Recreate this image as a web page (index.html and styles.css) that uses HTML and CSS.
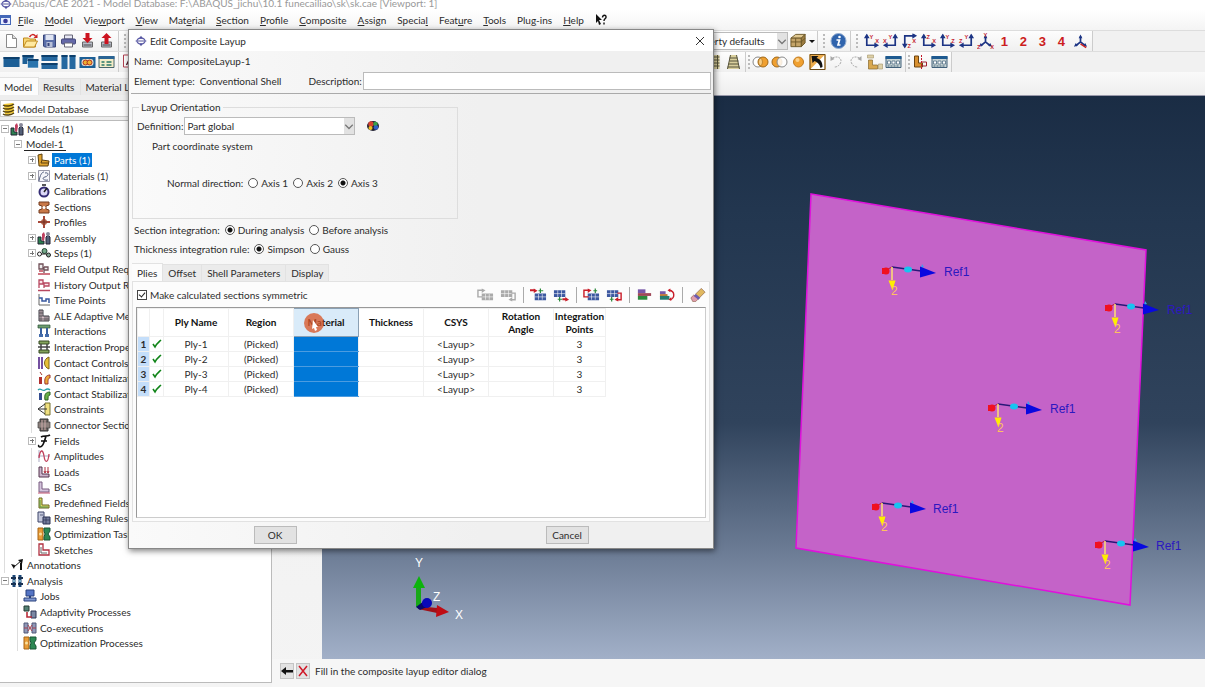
FILE: index.html
```html
<!DOCTYPE html>
<html lang="en">
  <head>
    <meta charset="UTF-8" />
    <title>Abaqus/CAE 2021</title>
    <link rel="stylesheet" href="styles.css">
  </head>
  <body>
    <!-- Icon sprite -->
    <svg class="sprite" aria-hidden="true">
      <symbol id="logo" viewBox="0 0 14 14"><path d="M7 1l2 3H5zM7 13l2-3H5zM0 7l3-1h8l3 1-3 1H3z" fill="#3c3c8c"/><ellipse cx="7" cy="7" rx="4.5" ry="3.5" fill="none" stroke="#5d5da8" stroke-width="1.6"/><path d="M3 7h8" stroke="#fff"/></symbol>
      <symbol id="appwin" viewBox="0 0 12 12"><rect x=".5" y="1.500" width="10" height="9" fill="#e8eeff" stroke="#4468b8"/><path d="M1 3h9" stroke="#4468b8" stroke-width="2"/><circle cx="5.500" cy="7" r="2.300" fill="#3a3a98"/></symbol>
      <symbol id="new" viewBox="0 0 16 16"><path d="M3 1.500h6l4 4v9H3z" fill="#fff" stroke="#8a8a8a"/><path d="M9 1.500v4h4" fill="#ddd" stroke="#8a8a8a"/></symbol>
      <symbol id="open" viewBox="0 0 16 16"><path d="M1 14V5h5l1 1h6v8z" fill="#f7d774" stroke="#c08a20"/><path d="M1 14l3-6h11l-3 6z" fill="#ffe9a0" stroke="#c08a20"/><path d="M7 4c2-3 4-3 6-1" fill="none" stroke="#c22" stroke-width="1.500"/><path d="M15 1v4h-4z" fill="#c22"/></symbol>
      <symbol id="save" viewBox="0 0 16 16"><path d="M2 2h12v12H3l-1-1z" fill="#5a6ea8" stroke="#38457a"/><path d="M4 2h8v5H4z" fill="#dfe4f2"/><path d="M5 9h6v5H5z" fill="#b8c0d8"/><path d="M6 10h2v3H6z" fill="#38457a"/></symbol>
      <symbol id="print" viewBox="0 0 16 16"><path d="M4 2h8v4H4z" fill="#e8e8f4" stroke="#667"/><rect x="1" y="6" width="14" height="5" rx="1" fill="#6468a8" stroke="#44487c"/><path d="M4 10h8v4H4z" fill="#fff" stroke="#667"/></symbol>
      <symbol id="dbin" viewBox="0 0 16 16"><path d="M3 9h10v5H3z" fill="#b8bcc8" stroke="#666"/><path d="M4 12h8" stroke="#444"/><path d="M6 0h4v5h3L8 10 3 5h3z" fill="#cc1420"/></symbol>
      <symbol id="dbout" viewBox="0 0 16 16"><path d="M3 9h10v5H3z" fill="#b8bcc8" stroke="#666"/><path d="M4 12h8" stroke="#444"/><path d="M6 11h4V5h3L8 0 3 5h3z" fill="#cc1420"/></symbol>
      <symbol id="vp1" viewBox="0 0 16 16"><path d="M0 3h16v10H0z" fill="#1d5f96"/><path d="M0 3h16v2H0z" fill="#0d3f6c"/></symbol>
      <symbol id="vp2" viewBox="0 0 16 16"><path d="M0 1h11v9H0z" fill="#1d5f96"/><path d="M0 1h11v2H0z" fill="#0d3f6c"/><path d="M5 5h11v9H5z" fill="#2a74ad" stroke="#fff" stroke-width=".6"/><path d="M5 5h11v2H5z" fill="#0d3f6c"/></symbol>
      <symbol id="vp3" viewBox="0 0 16 16"><path d="M0 1h16v6H0zM0 9h16v6H0z" fill="#2568a0"/><path d="M0 1h16v2H0zM0 9h16v2H0z" fill="#0d3f6c"/></symbol>
      <symbol id="vp4" viewBox="0 0 16 16"><path d="M1 1h6v14H1zM9 1h6v14H9z" fill="#2568a0"/><path d="M1 1h6v2H1zM9 1h6v2H9z" fill="#0d3f6c"/></symbol>
      <symbol id="link" viewBox="0 0 16 16"><path d="M0 3h16v11H0z" fill="#1d5f96"/><rect x="2" y="5" width="12" height="7" rx="3" fill="#e8e2d0"/><circle cx="6" cy="8.500" r="2.500" fill="#f0b030" stroke="#b03020"/><circle cx="10" cy="8.500" r="2.500" fill="#f0b030" stroke="#b03020"/></symbol>
      <symbol id="sheet" viewBox="0 0 16 16"><path d="M.5 2.500h15v11H.5z" fill="#f4ecc8" stroke="#48666c"/><path d="M0 2h16v3H0z" fill="#2a6494"/><path d="M3 7h3v2H3zM8 7h5v2H8zM3 10h3v2H3zM8 10h5v2H8z" fill="#5a9480"/></symbol>
      <symbol id="table" viewBox="0 0 16 16"><path d="M.5 2.500h15v11H.5z" fill="#c8d4d4" stroke="#41607a"/><path d="M0 2h16v3H0z" fill="#1e5a90"/><path d="M2 7h3v3H2zM6.500 7h3v3h-3zM11 7h3v3h-3z" fill="#fff" stroke="#41607a" stroke-width=".7"/><path d="M2 12h12" stroke="#41607a" stroke-dasharray="2 1"/></symbol>
      <symbol id="note" viewBox="0 0 16 16"><path d="M1 1h14v12H1z" fill="#fff" stroke="#b04050"/><path d="M4 11l4-8 4 8M5.500 8h5" fill="none" stroke="#5a2030" stroke-width="1.500"/></symbol>
      <symbol id="grid" viewBox="0 0 16 16"><path d="M3 1h10v14H3z" fill="#d9cf9c"/><path d="M3 3h10M3 6h10M3 9h10M3 12h10M5 1v14M11 1v14" stroke="#55523a"/></symbol>
      <symbol id="ladder" viewBox="0 0 16 16"><path d="M5 1h6l3 14H2z" fill="#d9cf9c"/><path d="M5 1L2 15M11 1l3 14M4 4h8M4 7h9M3 10h10M2 13h12" stroke="#55523a" fill="none"/></symbol>
      <symbol id="cube" viewBox="0 0 18 16"><path d="M1 5l5-4h10l-4 4z" fill="#e0c890" stroke="#6c5828"/><path d="M1 5h11v9H1z" fill="#c4a468" stroke="#6c5828"/><path d="M12 5l4-4v9l-4 4z" fill="#9c7c40" stroke="#6c5828"/><path d="M1 9h11l4-4M6 5v9" stroke="#6c5828" fill="none"/></symbol>
      <symbol id="info" viewBox="0 0 16 16"><circle cx="8" cy="8" r="7.500" fill="#2f63ac" stroke="#92acd0"/><circle cx="9" cy="4" r="1.300" fill="#fff"/><path d="M6 7h3l-1.500 5H10" fill="none" stroke="#fff" stroke-width="1.700"/></symbol>
      <symbol id="or1" viewBox="0 0 16 16"><circle cx="5.500" cy="8" r="5" fill="#fff" stroke="#888"/><circle cx="10.500" cy="8" r="5" fill="#f0a030" stroke="#a06818"/><path d="M8 4a5 5 0 0 1 0 8 5 5 0 0 1 0-8" fill="#f8cc80" stroke="#a06818" stroke-width=".6"/></symbol>
      <symbol id="or2" viewBox="0 0 16 16"><circle cx="5.500" cy="8" r="5" fill="#f0a030" stroke="#a06818"/><circle cx="10.500" cy="8" r="5" fill="#fff" fill-opacity=".85" stroke="#888"/></symbol>
      <symbol id="or3" viewBox="0 0 16 16"><circle cx="8" cy="8" r="5" fill="#f0a030" stroke="#c07a20"/><circle cx="7" cy="6" r="2" fill="#fbd08a"/></symbol>
      <symbol id="pick" viewBox="0 0 16 16"><path d="M0 0h16v16H0z" fill="#edac4c"/><path d="M1 15L15 1v14z" fill="#fff"/><path d="M2 2h7L7 4c4 1 6 4 6 9l-2 1c-1-4-3-6-6-7L3 9z" fill="#111"/><path d="M.5.5h15v15H.5z" fill="none" stroke="#6a4a18"/></symbol>
      <symbol id="undo" viewBox="0 0 16 16"><path d="M4 4c6-3 10 1 8 5s-5 4-6 4" fill="none" stroke="#a8a8a8" stroke-dasharray="2 1"/><path d="M2 2v5l4-2z" fill="#a8a8a8"/></symbol>
      <symbol id="redo" viewBox="0 0 16 16"><path d="M12 4C6 1 2 5 4 9s5 4 6 4" fill="none" stroke="#a8a8a8" stroke-dasharray="2 1"/><path d="M14 2v5l-4-2z" fill="#a8a8a8"/></symbol>
      <symbol id="parts" viewBox="0 0 16 16"><path d="M1 1h6v3H1z" fill="#ddd0a8" stroke="#a49468" stroke-width=".6"/><path d="M2 6h4v5h5v4H2z" fill="#d8a850" stroke="#86682c" stroke-width=".7"/><path d="M12 10h4v5h-4z" fill="#ddd0a8" stroke="#a49468" stroke-width=".6"/></symbol>
      <symbol id="cut" viewBox="0 0 16 16"><path d="M2 2h4v7h4v4H2z" fill="#d89030" stroke="#6c4410"/><path d="M9 8h5v4H9" fill="none" stroke="#a02030"/><path d="M9 1v14" stroke="#c01828" stroke-dasharray="2 1"/></symbol>
      <!-- view axes: the corner arrows shared by the view buttons -->
      <symbol id="axL" viewBox="0 0 18 16"><path d="M4 3v9.500h9" fill="none" stroke="#1c3484" stroke-width="1.800"/><path d="M1 5l3-5 3 5zM12 9.500l5 3-5 3z" fill="#1c3484"/></symbol>
      <symbol id="axR" viewBox="0 0 18 16"><path d="M14 3v9.500H5" fill="none" stroke="#1c3484" stroke-width="1.800"/><path d="M11 5l3-5 3 5zM6 9.500l-5 3 5 3z" fill="#1c3484"/></symbol>
      <symbol id="axT" viewBox="0 0 18 16"><path d="M4 13V2.500h9" fill="none" stroke="#1c3484" stroke-width="1.800"/><path d="M1 11l3 5 3-5zM12-.5l5 3-5 3z" fill="#1c3484"/></symbol>
      <symbol id="iso" viewBox="0 0 18 16"><path d="M9 3v6l-5 4M9 9l5 4" fill="none" stroke="#1c3484" stroke-width="1.800"/><path d="M7 5l2-4 2 4zM2 14l2-4 2 3zM16 14l-4-1 2-3z" fill="#1c3484"/></symbol>
      <!-- tree -->
      <symbol id="db" viewBox="0 0 14 14"><path d="M2 2l9-1 1 10-9 2z" fill="#f0c838"/><path d="M1 3c3 2 8 1 11-1M1 6c3 2 8 1 11-1M1 9c3 2 8 1 11-1M1 12c3 2 8 1 11-1" fill="none" stroke="#55420c" stroke-width="1.500"/></symbol>
      <symbol id="t-models" viewBox="0 0 14 14"><path d="M1 6h3v4h3v3H1z" fill="#2c8050" stroke="#223"/><path d="M5 9V3l2-2 1 3-1 6z" fill="#c04060"/><path d="M9 13V6l2-2 2 2v7z" fill="#546078" stroke="#223"/><circle cx="11" cy="3" r="2" fill="#889"/></symbol>
      <symbol id="t-part" viewBox="0 0 14 14"><path d="M1 2l4-1v6l7 1-1 5H2z" fill="#e0a430" stroke="#5c4010"/><path d="M5 7l-1 3h8" fill="none" stroke="#5c4010"/></symbol>
      <symbol id="t-mat" viewBox="0 0 14 14"><path d="M1.500 1.500h11v11h-11z" fill="#f4f4fa" stroke="#99a"/><path d="M2 12c1-6 3-9 5-9M8 4c4-1 4 3 0 4s-1 4 3 3" fill="none" stroke="#556080"/></symbol>
      <symbol id="t-cal" viewBox="0 0 14 14"><circle cx="7" cy="8" r="4.500" fill="#dcd8f8" stroke="#342c74" stroke-width="2"/><path d="M7 8l3-4M5 1h4" stroke="#222" stroke-width="1.500"/></symbol>
      <symbol id="t-sec" viewBox="0 0 14 14"><path d="M2 2h10v3l-3 1v3l3 1v3H2v-3l3-1V6L2 5z" fill="#c87848" stroke="#743c20"/><circle cx="7" cy="7.500" r="1.500" fill="#fff"/></symbol>
      <symbol id="t-prof" viewBox="0 0 14 14"><path d="M7 1v12M1 7h12" stroke="#a84838" stroke-width="2"/><circle cx="7" cy="7" r="3" fill="#b46048"/><path d="M4 7h6M7 4v6" stroke="#702c20"/></symbol>
      <symbol id="t-step" viewBox="0 0 14 14"><circle cx="2.500" cy="8" r="2" fill="#fff" stroke="#222"/><circle cx="7.500" cy="5" r="2.500" fill="#74a888" stroke="#224434"/><circle cx="11.500" cy="9" r="2" fill="#8a9" stroke="#222"/><path d="M4 8h6" stroke="#222"/></symbol>
      <symbol id="t-out" viewBox="0 0 14 14"><path d="M2 2h4v5H2zM7 5v6M7 5h4v3H7" fill="#eee" stroke="#705058" stroke-width="1.300"/><path d="M1 12h12M2 9h4" stroke="#c04858" stroke-width="1.500"/></symbol>
      <symbol id="t-hist" viewBox="0 0 14 14"><path d="M2 10V2h4v4H2M7 10V5h5v3H7" fill="#fbe4e8" stroke="#b84860" stroke-width="1.300"/><path d="M1 12.500h12" stroke="#b84860" stroke-width="1.500"/></symbol>
      <symbol id="t-time" viewBox="0 0 14 14"><path d="M2 1v11h11" fill="none" stroke="#666"/><path d="M2 5h3v3h4V6h3v4" fill="none" stroke="#3858a0" stroke-width="1.500"/></symbol>
      <symbol id="t-ale" viewBox="0 0 14 14"><path d="M2 1h4v6h6v5H2z" fill="#d8c0c8" stroke="#3c3c44"/><path d="M2 4h4M2 7h4M4 1v11M8 7v5M10 7v5M2 10h10" stroke="#3c3c44" stroke-width=".7"/></symbol>
      <symbol id="t-int" viewBox="0 0 14 14"><path d="M1 1h12v3H1z" fill="#6c9c70" stroke="#2c5034" stroke-width=".7"/><path d="M4 4v6M10 4v6" stroke="#3860a0" stroke-width="2"/><path d="M2 10h4v3H2zM8 10h4v3H8z" fill="#446cac"/></symbol>
      <symbol id="t-intp" viewBox="0 0 14 14"><path d="M2 1h10v3H2zM2 10h10v3H2z" fill="#84a45c" stroke="#344820"/><path d="M4 4v6M10 4v6M1 7h12" stroke="#444" stroke-width="1.500"/></symbol>
      <symbol id="t-cc" viewBox="0 0 14 14"><path d="M2 1v12M5 1v12" stroke="#7450a0" stroke-width="2"/><path d="M12 1c-6 2-6 10 0 12z" fill="#e8c038" stroke="#806414"/></symbol>
      <symbol id="t-ci" viewBox="0 0 14 14"><path d="M2 6h3v7H2z" fill="#b03030"/><path d="M3 1l2 3M8 13c-1-6 1-9 5-9v3c-2 0-2 2-2 6z" fill="#eca838" stroke="#a03830"/></symbol>
      <symbol id="t-cs" viewBox="0 0 14 14"><path d="M1 3c3-3 4 2 7 0s4-1 5 0" fill="none" stroke="#28a0a8" stroke-width="1.300"/><path d="M2 6h3v7H2z" fill="#344c90"/><path d="M8 13c-1-6 1-8 5-8v3c-2 0-2 2-2 5z" fill="#68b048" stroke="#2c6020"/></symbol>
      <symbol id="t-con" viewBox="0 0 14 14"><path d="M8 1h5v12H8z" fill="#f0e080" stroke="#747030"/><path d="M1 7l7-5M1 7l7 5M1 7h9" stroke="#333"/></symbol>
      <symbol id="t-conn" viewBox="0 0 14 14"><path d="M3 1h8v12H3z" fill="#6c6460" stroke="#333"/><path d="M1 4h12v6H1z" fill="#8c807c" stroke="#444" stroke-width=".7"/><path d="M5 2v10M8 2v10" stroke="#caa"/></symbol>
      <symbol id="t-field" viewBox="0 0 14 14"><path d="M4 3c3-2 6 0 9-2M9 2c-1 4-3 11-6 11-1 0-2-1-1-2M4 7h6" fill="none" stroke="#111" stroke-width="1.700"/></symbol>
      <symbol id="t-amp" viewBox="0 0 14 14"><path d="M2 1v12M1 7h12" stroke="#88a" stroke-width=".7"/><path d="M2 9c1-9 4-9 5-2s4 8 5-2" fill="none" stroke="#c0405c" stroke-width="1.300"/></symbol>
      <symbol id="t-load" viewBox="0 0 14 14"><path d="M2 2h3v7h7v3H2z" fill="#ccb4cc" stroke="#54344c"/><path d="M8 2v6M11 2v6M7 6l1 2 1-2M10 6l1 2 1-2" fill="none" stroke="#b03040"/></symbol>
      <symbol id="t-bc" viewBox="0 0 14 14"><path d="M2 2h3v7h7v3H2z" fill="#d4c4dc" stroke="#785c80"/><path d="M1 13h12" stroke="#c05070"/></symbol>
      <symbol id="t-pre" viewBox="0 0 14 14"><path d="M2 2h3v7h7v3H2z" fill="#e0dc68" stroke="#686420"/><path d="M3 4v7h8" fill="none" stroke="#50904c"/></symbol>
      <symbol id="t-rem" viewBox="0 0 14 14"><path d="M1 1h6v10H1z" fill="#c4c8dc" stroke="#3c4468"/><path d="M6 6h7v7H6z" fill="#747c9c" stroke="#2c3454"/><path d="M6 9h7M9 6v7M3 4h3" stroke="#2c3454" stroke-width=".7"/></symbol>
      <symbol id="t-opt" viewBox="0 0 14 14"><path d="M1 1h5v12H1z" fill="#e89c38" stroke="#a86414"/><path d="M7 1h6v3l-2 3 2 3v3H7v-3l1-3-1-3z" fill="#2c8854" stroke="#185434"/><circle cx="3.500" cy="7" r="1.500" fill="#f8e0a0"/></symbol>
      <symbol id="t-sk" viewBox="0 0 14 14"><path d="M2 1h4v6h6v5H2z" fill="#fff" stroke="#b03040" stroke-width="1.300"/><path d="M4 4v6h6" fill="none" stroke="#666"/></symbol>
      <symbol id="t-ann" viewBox="0 0 14 14"><path d="M12 2L4 9" stroke="#111"/><path d="M1 6l4 1-1 4zM8 2l5-1-1 5zM10 5h2v7h-2z" fill="#111"/></symbol>
      <symbol id="t-ana" viewBox="0 0 14 14"><path d="M4 1v12M10 1v12" stroke="#1c4878" stroke-width="3"/><path d="M1 4h5M1 10h5M8 4h5M8 10h5" stroke="#183050" stroke-width="2"/><circle cx="4" cy="7" r="1" fill="#9cd"/><circle cx="10" cy="7" r="1" fill="#9cd"/></symbol>
      <symbol id="t-job" viewBox="0 0 14 14"><path d="M3 1h8v6H3z" fill="#5474c4" stroke="#28407c"/><path d="M6 7h2v2H6z" fill="#28407c"/><path d="M1 9h12v3H1z" fill="#8098d0" stroke="#28407c"/></symbol>
      <symbol id="t-ada" viewBox="0 0 14 14"><path d="M1 1h5v5H1z" fill="#548074" stroke="#243c34"/><path d="M8 6h5v7H8z" fill="#7c88a4" stroke="#2c3454"/><path d="M4 7v5h5" fill="none" stroke="#b82c38" stroke-width="1.600"/></symbol>
      <symbol id="t-co" viewBox="0 0 14 14"><path d="M1 2h4v10H1zM9 2h4v10H9z" fill="#9098b8" stroke="#505878"/><path d="M5 4l4 6M9 4l-4 6M1 7h4M9 7h4" stroke="#a84050"/></symbol>
      <!-- ply table -->
      <symbol id="p-rows" viewBox="0 0 18 14"><path d="M5 5.500h12v7H5z" fill="currentColor"/><path d="M5 9h12M9 6v6M13 6v6" stroke="#fff" stroke-width=".6"/></symbol>
      <symbol id="p-rowsup" viewBox="0 0 18 14"><path d="M1 2h12v7H1z" fill="currentColor"/><path d="M1 5.500h12M5 2v7M9 2v7" stroke="#fff" stroke-width=".6"/></symbol>
      <symbol id="wheel" viewBox="0 0 14 14"><ellipse cx="7" cy="7" rx="6" ry="5" fill="#223"/><circle cx="5" cy="5" r="2.700" fill="#d84030"/><circle cx="9.500" cy="5" r="2.200" fill="#38a048"/><circle cx="4.500" cy="9" r="2" fill="#f0c020"/><circle cx="10" cy="8.500" r="2.300" fill="#3060c8"/></symbol>
      <symbol id="check" viewBox="0 0 10 10"><path d="M1 5l2 3c2-4 4-5 6-7" fill="none" stroke="#108418" stroke-width="1.600"/></symbol>
      <symbol id="chev" viewBox="0 0 8 8"><path d="M1 3l3 3 3-3" fill="none" stroke="#777"/></symbol>
      <!-- material orientation marker, origin at 10,10 -->
      <symbol id="marker" viewBox="0 0 60 40"><path d="M4 13l6-3" stroke="#c01830"/><circle cx="4" cy="14" r="3.500" fill="#f01020"/><path d="M0 11h4v6H0z" fill="#f01020"/><path d="M10 10l29 4" stroke="#281878" stroke-width="1.300"/><ellipse cx="26" cy="12.500" rx="4" ry="3" fill="#18c4f0"/><path d="M40 7l2 3-3 1z" fill="#38a0f0"/><path d="M38 9.500l16 6.500-16 4.500z" fill="#0808e0"/><path d="M10 10v13" stroke="#ffe070" stroke-width="1.500"/><path d="M6.500 23.500h7l-3 10z" fill="#ffee00"/></symbol>
    </svg>

    <header class="titlebar">
      <svg class="ico-s"><use href="#logo"/></svg>
      <span>Abaqus/CAE 2021 - Model Database: F:\ABAQUS_jichu\10.1 funecailiao\sk\sk.cae [Viewport: 1]</span>
    </header>

    <nav class="menubar">
      <svg class="ico-s"><use href="#appwin"/></svg>
      <button><u>F</u>ile</button>
      <button><u>M</u>odel</button>
      <button>Vie<u>w</u>port</button>
      <button><u>V</u>iew</button>
      <button>Mat<u>e</u>rial</button>
      <button><u>S</u>ection</button>
      <button><u>P</u>rofile</button>
      <button><u>C</u>omposite</button>
      <button><u>A</u>ssign</button>
      <button>Specia<u>l</u></button>
      <button>Feat<u>u</u>re</button>
      <button><u>T</u>ools</button>
      <button>Plu<u>g</u>-ins</button>
      <button><u>H</u>elp</button>
      <button class="whats" aria-label="What's this">
        <svg class="ico-s" viewBox="0 0 12 12"><path d="M1 0l6 6H4l2 4-2 1-1-4-2 2z" fill="#111"/><path d="M7.500 3.500c0-3 4-3 3.500 0-.5 1.500-2 1.500-2 3.500M9 8.500v2" fill="none" stroke="#111" stroke-width="1.400"/></svg>
      </button>
    </nav>

    <div class="toolbar">
      <div class="group">
        <button aria-label="New"><svg><use href="#new"/></svg></button>
        <button aria-label="Open"><svg><use href="#open"/></svg></button>
        <button aria-label="Save"><svg><use href="#save"/></svg></button>
        <button aria-label="Print"><svg><use href="#print"/></svg></button>
        <button aria-label="Import"><svg><use href="#dbin"/></svg></button>
        <button aria-label="Export"><svg><use href="#dbout"/></svg></button>
      </div>
      <div class="group group-defaults">
        <i class="grip"></i>
        <div class="combo combo-defaults">
          <select aria-label="Color code"><option>Property defaults</option></select>
          <svg><use href="#chev"/></svg>
        </div>
        <button class="wide" aria-label="Render style"><svg><use href="#cube"/></svg><b class="drop"></b></button>
      </div>
      <div class="group">
        <i class="grip"></i>
        <button aria-label="Query"><svg><use href="#info"/></svg></button>
      </div>
      <div class="group">
        <i class="grip"></i>
        <button aria-label="Front view"><svg viewBox="0 0 18 16"><use href="#axL"/><text x="7" y="6">Y</text><text x="13" y="10">X</text></svg></button>
        <button aria-label="Back view"><svg viewBox="0 0 18 16"><use href="#axR"/><text x="7" y="6">Y</text><text x="1" y="10">X</text></svg></button>
        <button aria-label="Top view"><svg viewBox="0 0 18 16"><use href="#axT"/><text x="12" y="10">X</text><text x="7" y="15">Z</text></svg></button>
        <button aria-label="Bottom view"><svg viewBox="0 0 18 16"><use href="#axL"/><text x="7" y="6">Z</text><text x="13" y="10">X</text></svg></button>
        <button aria-label="Left view"><svg viewBox="0 0 18 16"><use href="#axL"/><text x="7" y="6">Y</text><text x="13" y="10">Z</text></svg></button>
        <button aria-label="Right view"><svg viewBox="0 0 18 16"><use href="#axR"/><text x="7" y="6">Y</text><text x="1" y="10">Z</text></svg></button>
        <button aria-label="Iso view"><svg viewBox="0 0 18 16"><use href="#iso"/><text x="7" y="4">Y</text><text x="0" y="16">Z</text><text x="14" y="16">X</text></svg></button>
        <button class="num">1</button>
        <button class="num">2</button>
        <button class="num">3</button>
        <button class="num">4</button>
        <button aria-label="Specify view"><svg viewBox="0 0 18 16"><use href="#iso"/><path d="M9 11l6 4" stroke="#c22" stroke-width="1.500"/></svg></button>
      </div>
    </div>

    <div class="toolbar tight">
      <div class="group">
        <button aria-label="Single viewport"><svg><use href="#vp1"/></svg></button>
        <button aria-label="Cascade"><svg><use href="#vp2"/></svg></button>
        <button aria-label="Tile horizontally"><svg><use href="#vp3"/></svg></button>
        <button aria-label="Tile vertically"><svg><use href="#vp4"/></svg></button>
        <button aria-label="Link viewports"><svg><use href="#link"/></svg></button>
        <button aria-label="Viewport options"><svg><use href="#sheet"/></svg></button>
      </div>
      <div class="group group-mesh">
        <button aria-label="Annotation"><svg><use href="#note"/></svg></button>
        <button class="push" aria-label="Parallel"><svg><use href="#grid"/></svg></button>
        <button aria-label="Perspective"><svg><use href="#ladder"/></svg></button>
      </div>
      <div class="group">
        <i class="grip"></i>
        <button aria-label="Replace"><svg><use href="#or1"/></svg></button>
        <button aria-label="Remove"><svg><use href="#or2"/></svg></button>
        <button aria-label="All"><svg><use href="#or3"/></svg></button>
        <button aria-label="Pick"><svg><use href="#pick"/></svg></button>
        <button aria-label="Undo"><svg><use href="#undo"/></svg></button>
        <button aria-label="Redo"><svg><use href="#redo"/></svg></button>
        <button aria-label="Instances"><svg><use href="#parts"/></svg></button>
        <button aria-label="Display groups"><svg><use href="#table"/></svg></button>
      </div>
      <div class="group">
        <i class="grip"></i>
        <button aria-label="View cut"><svg><use href="#cut"/></svg></button>
        <button aria-label="View cut manager"><svg><use href="#table"/></svg></button>
      </div>
    </div>

    <main class="workspace">
      <aside class="sidebar">
        <div class="tabs side-tabs">
          <button class="active">Model</button>
          <button>Results</button>
          <button>Material Library</button>
        </div>
        <div class="db-bar"><svg class="ico"><use href="#db"/></svg>Model Database</div>
        <ul class="tree">
          <li><i class="box minus"></i><svg class="ico"><use href="#t-models"/></svg><span>Models (1)</span></li>
          <li class="l2 in"><i class="box minus"></i><span class="current">Model-1</span></li>
          <li class="l3 in"><i class="box plus"></i><svg class="ico"><use href="#t-part"/></svg><span class="selected">Parts (1)</span></li>
          <li class="l3 in"><i class="box plus"></i><svg class="ico"><use href="#t-mat"/></svg><span>Materials (1)</span></li>
          <li class="l3 in"><i class="box"></i><svg class="ico"><use href="#t-cal"/></svg><span>Calibrations</span></li>
          <li class="l3 in"><i class="box"></i><svg class="ico"><use href="#t-sec"/></svg><span>Sections</span></li>
          <li class="l3 in"><i class="box"></i><svg class="ico"><use href="#t-prof"/></svg><span>Profiles</span></li>
          <li class="l3 in"><i class="box plus"></i><svg class="ico"><use href="#t-models"/></svg><span>Assembly</span></li>
          <li class="l3 in"><i class="box plus"></i><svg class="ico"><use href="#t-step"/></svg><span>Steps (1)</span></li>
          <li class="l3 in"><i class="box"></i><svg class="ico"><use href="#t-out"/></svg><span>Field Output Requests</span></li>
          <li class="l3 in"><i class="box"></i><svg class="ico"><use href="#t-hist"/></svg><span>History Output Requests</span></li>
          <li class="l3 in"><i class="box"></i><svg class="ico"><use href="#t-time"/></svg><span>Time Points</span></li>
          <li class="l3 in"><i class="box"></i><svg class="ico"><use href="#t-ale"/></svg><span>ALE Adaptive Mesh Constraints</span></li>
          <li class="l3 in"><i class="box"></i><svg class="ico"><use href="#t-int"/></svg><span>Interactions</span></li>
          <li class="l3 in"><i class="box"></i><svg class="ico"><use href="#t-intp"/></svg><span>Interaction Properties</span></li>
          <li class="l3 in"><i class="box"></i><svg class="ico"><use href="#t-cc"/></svg><span>Contact Controls</span></li>
          <li class="l3 in"><i class="box"></i><svg class="ico"><use href="#t-ci"/></svg><span>Contact Initializations</span></li>
          <li class="l3 in"><i class="box"></i><svg class="ico"><use href="#t-cs"/></svg><span>Contact Stabilizations</span></li>
          <li class="l3 in"><i class="box"></i><svg class="ico"><use href="#t-con"/></svg><span>Constraints</span></li>
          <li class="l3 in"><i class="box"></i><svg class="ico"><use href="#t-conn"/></svg><span>Connector Sections</span></li>
          <li class="l3 in"><i class="box plus"></i><svg class="ico"><use href="#t-field"/></svg><span>Fields</span></li>
          <li class="l3 in"><i class="box"></i><svg class="ico"><use href="#t-amp"/></svg><span>Amplitudes</span></li>
          <li class="l3 in"><i class="box"></i><svg class="ico"><use href="#t-load"/></svg><span>Loads</span></li>
          <li class="l3 in"><i class="box"></i><svg class="ico"><use href="#t-bc"/></svg><span>BCs</span></li>
          <li class="l3 in"><i class="box"></i><svg class="ico"><use href="#t-pre"/></svg><span>Predefined Fields</span></li>
          <li class="l3 in"><i class="box"></i><svg class="ico"><use href="#t-rem"/></svg><span>Remeshing Rules</span></li>
          <li class="l3 in"><i class="box"></i><svg class="ico"><use href="#t-opt"/></svg><span>Optimization Tasks</span></li>
          <li class="l3 in"><i class="box"></i><svg class="ico"><use href="#t-sk"/></svg><span>Sketches</span></li>
          <li><i class="box"></i><svg class="ico"><use href="#t-ann"/></svg><span>Annotations</span></li>
          <li><i class="box minus"></i><svg class="ico"><use href="#t-ana"/></svg><span>Analysis</span></li>
          <li class="l2"><i class="box"></i><svg class="ico"><use href="#t-job"/></svg><span>Jobs</span></li>
          <li class="l2"><i class="box"></i><svg class="ico"><use href="#t-ada"/></svg><span>Adaptivity Processes</span></li>
          <li class="l2"><i class="box"></i><svg class="ico"><use href="#t-co"/></svg><span>Co-executions</span></li>
          <li class="l2"><i class="box"></i><svg class="ico"><use href="#t-opt"/></svg><span>Optimization Processes</span></li>
        </ul>
      </aside>

      <section class="stage">
        <div class="canvas">
          <svg class="scene" viewBox="322 96 883 563" preserveAspectRatio="xMidYMid meet">
            <polygon points="811,194 1146,250 1130,605 796,548" fill="#c463c8" stroke="#e010dc" stroke-width="1.500"/>
            <use href="#marker" x="882" y="257" width="60" height="40"/>
            <use href="#marker" x="1105" y="294" width="60" height="40"/>
            <use href="#marker" x="988" y="394" width="60" height="40"/>
            <use href="#marker" x="872" y="493" width="60" height="40"/>
            <use href="#marker" x="1095" y="531" width="60" height="40"/>
            <g class="ref">
              <text x="944" y="276">Ref1</text>
              <text x="1167" y="314">Ref1</text>
              <text x="1050" y="413">Ref1</text>
              <text x="933" y="513">Ref1</text>
              <text x="1156" y="550">Ref1</text>
            </g>
            <g class="two">
              <text x="891" y="295">2</text>
              <text x="1114" y="333">2</text>
              <text x="997" y="432">2</text>
              <text x="881" y="531">2</text>
              <text x="1104" y="569">2</text>
            </g>
            <!-- view triad -->
            <path d="M416 607V586h5v21z" fill="#18a818"/>
            <path d="M413 588l6-12 6 12z" fill="#0cb40c"/>
            <path d="M418 606l19 2v5l-19-4z" fill="#a01018"/>
            <path d="M437 605l12 7-13 5z" fill="#c00c14"/>
            <path d="M416 607l8-6 3 6-7 3z" fill="#08086c"/>
            <circle cx="427" cy="603" r="5" fill="#0808b8"/>
            <g class="axis">
              <text x="415" y="567">Y</text>
              <text x="433" y="601">Z</text>
              <text x="455" y="619">X</text>
            </g>
          </svg>
        </div>
        <footer class="prompt">
          <button aria-label="Previous"><svg viewBox="0 0 12 12"><path d="M0 6l5-4v3h7v2.500H5V10z" fill="#111"/></svg></button>
          <button aria-label="Cancel step"><svg viewBox="0 0 12 12"><path d="M2 1l8 10M10 1L2 11" stroke="#d01828" stroke-width="1.500"/></svg></button>
          <span>Fill in the composite layup editor dialog</span>
        </footer>
      </section>
    </main>

    <!-- Edit Composite Layup -->
    <form class="dialog">
      <div class="dialog-title">
        <svg class="ico-s"><use href="#logo"/></svg>
        <span>Edit Composite Layup</span>
        <button type="button" class="close" aria-label="Close"><svg viewBox="0 0 10 10"><path d="M1 1l8 8M9 1L1 9" stroke="#333"/></svg></button>
      </div>
      <div class="info">
        <p><span>Name:</span><span>CompositeLayup-1</span></p>
        <p><span>Element type:</span><span>Conventional Shell</span><label for="desc">Description:</label><input type="text" id="desc"></p>
      </div>

      <fieldset class="orient">
        <legend>Layup Orientation</legend>
        <div class="line definition">
          <label for="definition">Definition:</label>
          <div class="combo">
            <select id="definition"><option>Part global</option></select>
            <svg><use href="#chev"/></svg>
          </div>
          <svg class="ico wheel"><use href="#wheel"/></svg>
        </div>
        <p class="csys">Part coordinate system</p>
        <div class="line normal">
          <span>Normal direction:</span>
          <label><input type="radio" name="axis">Axis 1</label>
          <label><input type="radio" name="axis">Axis 2</label>
          <label><input type="radio" name="axis" checked>Axis 3</label>
        </div>
      </fieldset>

      <div class="integration">
        <div class="line">
          <span>Section integration:</span>
          <label><input type="radio" name="when" checked>During analysis</label>
          <label><input type="radio" name="when">Before analysis</label>
        </div>
        <div class="line">
          <span>Thickness integration rule:</span>
          <label><input type="radio" name="rule" checked>Simpson</label>
          <label><input type="radio" name="rule">Gauss</label>
        </div>
      </div>

      <div class="tabs">
        <button type="button" class="active">Plies</button>
        <button type="button">Offset</button>
        <button type="button">Shell Parameters</button>
        <button type="button">Display</button>
      </div>

      <div class="plies">
        <div class="plies-bar">
          <label><input type="checkbox" checked>Make calculated sections symmetric</label>
          <div class="ply-tools">
            <button type="button" class="off" aria-label="Move up"><svg viewBox="0 0 18 14"><use href="#p-rows"/><path d="M6 9H1V2h5" fill="none" stroke="currentColor" stroke-width="1.500"/><path d="M5 0l4 2-4 3z" fill="currentColor"/></svg></button>
            <button type="button" class="off" aria-label="Move down"><svg viewBox="0 0 18 14"><use href="#p-rowsup"/><path d="M12 5h4v7h-4" fill="none" stroke="currentColor" stroke-width="1.500"/><path d="M13 9l-4 3 4 2z" fill="currentColor"/></svg></button>
            <i></i>
            <button type="button" aria-label="Insert before"><svg viewBox="0 0 18 14"><use href="#p-rows"/><path d="M11 0v5M9 2.500h5" stroke="#2c8a3c" stroke-width="1.300"/><path d="M0 1h4v-1l4 2.500L4 5V3H0z" fill="#c81c28"/></svg></button>
            <button type="button" aria-label="Insert after"><svg viewBox="0 0 18 14"><use href="#p-rowsup"/><path d="M7 9v5M5 11.500h5" stroke="#2c8a3c" stroke-width="1.300"/><path d="M10 10.500h3V9l4 3-4 2v-1.500h-3z" fill="#c81c28"/></svg></button>
            <i></i>
            <button type="button" aria-label="Copy before"><svg viewBox="0 0 18 14"><use href="#p-rows"/><path d="M6 9H1V2h5" fill="none" stroke="#c81c28" stroke-width="1.500"/><path d="M5 0l4 2-4 3z" fill="#c81c28"/><path d="M13 0v5M11 2.500h4" stroke="#2c8a3c" stroke-width="1.300"/></svg></button>
            <button type="button" aria-label="Copy after"><svg viewBox="0 0 18 14"><use href="#p-rowsup"/><path d="M12 5h4v7h-4" fill="none" stroke="#c81c28" stroke-width="1.500"/><path d="M13 9l-4 3 4 2z" fill="#c81c28"/><path d="M6 9v5M4 11.500h4" stroke="#2c8a3c" stroke-width="1.300"/></svg></button>
            <i></i>
            <button type="button" aria-label="Pattern"><svg viewBox="0 0 18 14"><path d="M2 1h8v4H2z" fill="#7858a8"/><path d="M2 5h14v3H2z" fill="#a04858"/><path d="M2 8h10v4H2z" fill="#2c8a3c"/></svg></button>
            <button type="button" aria-label="Flip"><svg viewBox="0 0 18 14"><path d="M1 3h6v3H1z" fill="#7858a8"/><path d="M1 6h8v3H1z" fill="#c07838"/><path d="M1 8h10v4H1z" fill="#287c70"/><path d="M11 2c6 1 6 8 1 10" fill="none" stroke="#c81c28" stroke-width="1.500"/><path d="M12 0v4l-3-2zM13 9v4l-3-1z" fill="#c81c28"/></svg></button>
            <i></i>
            <button type="button" aria-label="Erase"><svg viewBox="0 0 18 14"><path d="M7 6l6-6 4 4-6 6z" fill="#e0b860" stroke="#7c4c34" stroke-width=".6"/><path d="M2 10l3-3 5 4-3 3H4z" fill="#e09cac" stroke="#7c4c34" stroke-width=".6"/><path d="M5 8l5 4 2-2-5-4z" fill="#6c5cb0"/></svg></button>
          </div>
        </div>
        <div class="sheet">
          <table>
            <colgroup><col class="c-num"><col class="c-chk"><col span="6" class="c-data"><col class="c-pts"></colgroup>
            <thead>
              <tr><th></th><th></th><th>Ply Name</th><th>Region</th>
                <th class="hot">Material
                  <svg class="pointer" viewBox="0 0 22 22"><circle cx="11" cy="11" r="10" fill="#d8592b" fill-opacity=".78"/><path d="M10 8l5 7h-2l1 3-2 1-1-3-2 1z" fill="#fff"/></svg>
                </th>
                <th>Thickness</th><th>CSYS</th><th>Rotation Angle</th><th>Integration Points</th></tr>
            </thead>
            <tbody>
              <tr><th>1</th><td><svg><use href="#check"/></svg></td><td>Ply-1</td><td>(Picked)</td><td class="sel"></td><td></td><td>&lt;Layup&gt;</td><td></td><td>3</td></tr>
              <tr><th>2</th><td><svg><use href="#check"/></svg></td><td>Ply-2</td><td>(Picked)</td><td class="sel"></td><td></td><td>&lt;Layup&gt;</td><td></td><td>3</td></tr>
              <tr><th>3</th><td><svg><use href="#check"/></svg></td><td>Ply-3</td><td>(Picked)</td><td class="sel"></td><td></td><td>&lt;Layup&gt;</td><td></td><td>3</td></tr>
              <tr><th>4</th><td><svg><use href="#check"/></svg></td><td>Ply-4</td><td>(Picked)</td><td class="sel"></td><td></td><td>&lt;Layup&gt;</td><td></td><td>3</td></tr>
            </tbody>
          </table>
        </div>
      </div>

      <div class="actions">
        <button type="button">OK</button>
        <button type="button">Cancel</button>
      </div>
    </form>
  </body>
</html>
```
FILE: styles.css
```css
* {
  box-sizing: border-box;
}
body {
  margin: 0;
  height: 100vh;
  display: flex;
  flex-direction: column;
  overflow: hidden;
  position: relative;
  background: #f1f1f1;
  color: #2c2c2c;
  font: 10px/14px Lato, "Noto Sans", sans-serif;
}
button,
input,
select {
  font: inherit;
  color: inherit;
}
button {
  border: 0;
  padding: 0;
  background: none;
}
p {
  margin: 0;
}
.sprite {
  display: none;
}
.ico {
  width: 14px;
  height: 14px;
  flex: none;
}
.ico-s {
  width: 12px;
  height: 12px;
  flex: none;
}

/* title + menu */
.titlebar {
  height: 10px;
  display: flex;
  align-items: flex-end;
  overflow: hidden;
  background: #fff;
  color: #999;
  white-space: nowrap;
}
.titlebar span {
  flex: none;
}
.menubar {
  height: 20px;
  display: flex;
  align-items: center;
  gap: 1px;
  background: linear-gradient(#fff, #f4f4f4);
}
.menubar button {
  padding: 0 5px;
}
.menubar .whats {
  height: 12px;
}

/* toolbars */
.toolbar {
  height: 21px;
  display: flex;
  border-top: 1px solid #ddd;
}
.group {
  display: flex;
  align-items: center;
  padding: 0 2px;
  border-right: 1px solid #ccc;
  background: linear-gradient(#fdfdfd, #f0f0f0);
}
.group button {
  width: 19px;
  height: 18px;
  display: flex;
  align-items: center;
  justify-content: center;
}
.group button svg {
  width: 17px;
  height: 16px;
}
.group text {
  font: bold 6px "Liberation Sans", sans-serif;
  fill: #c42430;
}
.group .wide {
  width: 25px;
  gap: 2px;
}
.group .push {
  margin-left: auto;
}
.group .num {
  font: bold 13px "Liberation Sans", sans-serif;
  color: #cc1c20;
}
.grip {
  width: 3px;
  height: 14px;
  margin: 0 3px;
  border-left: 2px dotted #bbb;
}
.tight .grip {
  margin: 0;
}
.group-defaults {
  width: 58%;
  gap: 2px;
}
.group-mesh {
  width: 52%;
}
.drop {
  border: 3px solid transparent;
  border-top-color: #111;
  border-bottom: 0;
}
.combo {
  display: flex;
  align-items: center;
  height: 18px;
  border: 1px solid #bbb;
  background: #fff;
}
.combo select {
  flex: 1;
  min-width: 0;
  appearance: none;
  border: 0;
  padding: 0 2px;
  background: none;
}
.combo svg {
  width: 10px;
  height: 16px;
  background: #e2e2e2;
}
.combo-defaults {
  width: 104px;
  margin-left: auto;
}
.combo-defaults select {
  padding: 0 4px;
}

/* workspace */
.workspace {
  flex: 1;
  min-height: 0;
  display: flex;
  padding-top: 5px;
  background: linear-gradient(#fafafa, #eee 24px, #f4f4f4);
}
.sidebar {
  width: 272px;
  flex: none;
  display: flex;
  flex-direction: column;
  padding-bottom: 4px;
}
.tabs {
  display: flex;
  align-items: flex-end;
  height: 18px;
}
.tabs button {
  height: 17px;
  padding: 0 5px;
  background: #ebebeb;
  border: 1px solid #e2e2e2;
  border-width: 1px 1px 0 0;
}
.tabs .active {
  height: 18px;
  background: #fcfcfc;
}
.side-tabs button {
  padding: 0 6px 0 4px;
}
.db-bar {
  display: flex;
  align-items: center;
  gap: 1px;
  height: 17px;
  margin: 5px 0 3px;
  padding-left: 1px;
  border: 1px solid #ccc;
  background: #fff;
}
.tree {
  flex: 1;
  margin: 0;
  padding: 0 0 31px;
  list-style: none;
  display: grid;
  grid-auto-rows: 1fr;
  border: 1px solid #bbb;
  border-left: 0;
  background: #fff;
}
.tree li {
  display: flex;
  align-items: center;
  min-height: 0;
  white-space: nowrap;
}
.tree .l2 {
  padding-left: 13px;
}
.tree .l3 {
  padding-left: 27px;
}
.tree .in {
  background: linear-gradient(#ddd, #ddd) 4px 0 / 1px 100% no-repeat;
}
.tree span {
  margin-left: 1px;
  padding: 0 2px;
}
.tree .current {
  border-bottom: 1px solid #222;
  line-height: 12px;
}
.tree .selected {
  background: #0078d7;
  color: #fff;
}
.box {
  width: 10px;
  align-self: stretch;
  flex: none;
  background: linear-gradient(#ddd, #ddd) 4px 0 / 1px 100% no-repeat;
}
.plus,
.minus {
  align-self: center;
  width: 8px;
  height: 8px;
  margin: 0 1px;
  border: 1px solid #bbb;
  background: linear-gradient(#777, #777) center / 4px 1px no-repeat, #fff;
}
.plus {
  background: linear-gradient(#777, #777) center / 4px 1px no-repeat,
    linear-gradient(#777, #777) center / 1px 4px no-repeat, #fff;
}

/* viewport */
.stage {
  flex: 1;
  min-width: 0;
  display: flex;
  flex-direction: column;
  padding-top: 18px;
}
.canvas {
  flex: 1;
  min-height: 0;
  margin-left: 50px;
  border-top: 1px solid #99a;
  background: linear-gradient(#1a2c44, #22364f 20%, #30435c 58%, #6c7c95 81%, #a2b0c8);
}
.scene {
  display: block;
  width: 100%;
  height: 100%;
}
.scene text {
  font: 12px "Liberation Sans", sans-serif;
}
.ref {
  fill: #2c18c0;
}
.two {
  fill: #ffc060;
}
.axis {
  fill: #fff;
}
.prompt {
  height: 28px;
  display: flex;
  align-items: center;
  gap: 2px;
  padding: 0 8px 4px;
  background: #f6f6f6;
}
.prompt button {
  width: 14px;
  height: 16px;
  background: #e2e2e2;
  border: 1px solid #c4c4c4;
}
.prompt svg {
  display: block;
  width: 12px;
  height: 12px;
}
.prompt span {
  margin-left: 3px;
}

/* dialog window */
.dialog {
  position: absolute;
  left: 128px;
  top: 29px;
  width: 586px;
  height: 520px;
  display: flex;
  flex-direction: column;
  border: 1px solid #888;
  background: linear-gradient(90deg, #fafafa, #f0f0f0 60%);
  box-shadow: 1px 2px 6px rgba(0, 0, 0, 0.5);
}
.dialog-title {
  display: flex;
  align-items: center;
  gap: 3px;
  height: 21px;
  padding: 0 6px;
  background: #fff;
}
.close {
  margin-left: auto;
  width: 12px;
  height: 10px;
}
.close svg {
  display: block;
  width: 10px;
  height: 10px;
}
.info {
  display: flex;
  flex-direction: column;
  margin: 0 2px;
  padding: 0 0 2px 3px;
  border-bottom: 1px solid #aaa;
}
.info p {
  display: flex;
  align-items: center;
  gap: 5px;
  height: 20px;
}
.info label {
  margin-left: 22px;
}
.info input {
  flex: 1;
  height: 18px;
  margin-left: -4px;
  border: 1px solid #bbb;
  background: #fff;
}
.orient {
  width: 326px;
  margin: 6px 0 0 3px;
  padding: 2px 4px 26px;
  border: 1px solid #ddd;
}
.orient legend {
  margin-left: 2px;
  padding: 0 2px;
}
.line {
  display: flex;
  align-items: center;
  gap: 5px;
  height: 19px;
}
.definition {
  gap: 1px;
}
.orient .combo {
  width: 171px;
}
.wheel {
  margin-left: 10px;
}
.csys {
  padding: 4px 0 0 15px;
}
.normal {
  margin-top: 20px;
  padding-left: 30px;
}
.line label,
.plies-bar label {
  display: flex;
  align-items: center;
  gap: 3px;
}
input[type="radio"] {
  appearance: none;
  width: 10px;
  height: 10px;
  margin: 0;
  border: 1px solid #555;
  border-radius: 50%;
  background: #fff;
}
input[type="radio"]:checked {
  background: radial-gradient(#111 0 2px, #fff 3px);
}
.integration {
  padding: 1px 0 5px 5px;
}
.dialog .tabs {
  margin-left: 3px;
}
.plies {
  flex: 1;
  display: flex;
  flex-direction: column;
  margin: 0 3px;
  padding: 0 3px 3px 3px;
  border: 1px solid #e2e2e2;
  background: #fcfcfc;
}
.plies-bar {
  height: 25px;
  display: flex;
  align-items: center;
  justify-content: space-between;
}
input[type="checkbox"] {
  appearance: none;
  width: 10px;
  height: 10px;
  margin: 0 0 0 1px;
  border: 1px solid #444;
  background: #fff;
  position: relative;
}
input[type="checkbox"]:checked::after {
  content: "";
  position: absolute;
  left: 2px;
  top: 0;
  width: 3px;
  height: 5px;
  border: solid #222;
  border-width: 0 1px 1px 0;
  transform: rotate(40deg);
}
.ply-tools {
  display: flex;
  align-items: center;
  gap: 6px;
}
.ply-tools button {
  height: 14px;
  color: #3c58a0;
}
.ply-tools svg {
  display: block;
  width: 17px;
  height: 14px;
}
.ply-tools .off {
  color: #aaa;
}
.ply-tools i {
  width: 1px;
  height: 16px;
  background: #aaa;
}
.sheet {
  flex: 1;
  border: 1px solid #999;
  border-right-color: #ccc;
  border-bottom-color: #ccc;
  background: #fff;
}
table {
  table-layout: fixed;
  width: 468px;
  border-collapse: collapse;
  text-align: center;
}
.c-num {
  width: 12px;
}
.c-chk {
  width: 14px;
}
.c-data {
  width: 65px;
}
.c-pts {
  width: 52px;
}
th,
td {
  height: 15px;
  padding: 0;
  border: 1px solid #f0f0f0;
  line-height: 13px;
}
thead th {
  height: 28px;
  color: #111;
}
tbody th {
  background: #c4defa;
}
td svg {
  display: block;
  width: 10px;
  height: 10px;
  margin: auto;
}
.hot {
  position: relative;
  background: #d9ebf9;
  border: 1px solid #8aa0b4;
}
.pointer {
  position: absolute;
  left: 9px;
  top: 3px;
  width: 22px;
  height: 22px;
}
.sel {
  background: #0078d7;
  border-bottom-color: #4c9ce0;
}
.actions {
  display: flex;
  justify-content: space-around;
  align-items: center;
  height: 26px;
}
.actions button {
  width: 43px;
  height: 18px;
  border: 1px solid #bbb;
  background: #e2e2e2;
}
```
